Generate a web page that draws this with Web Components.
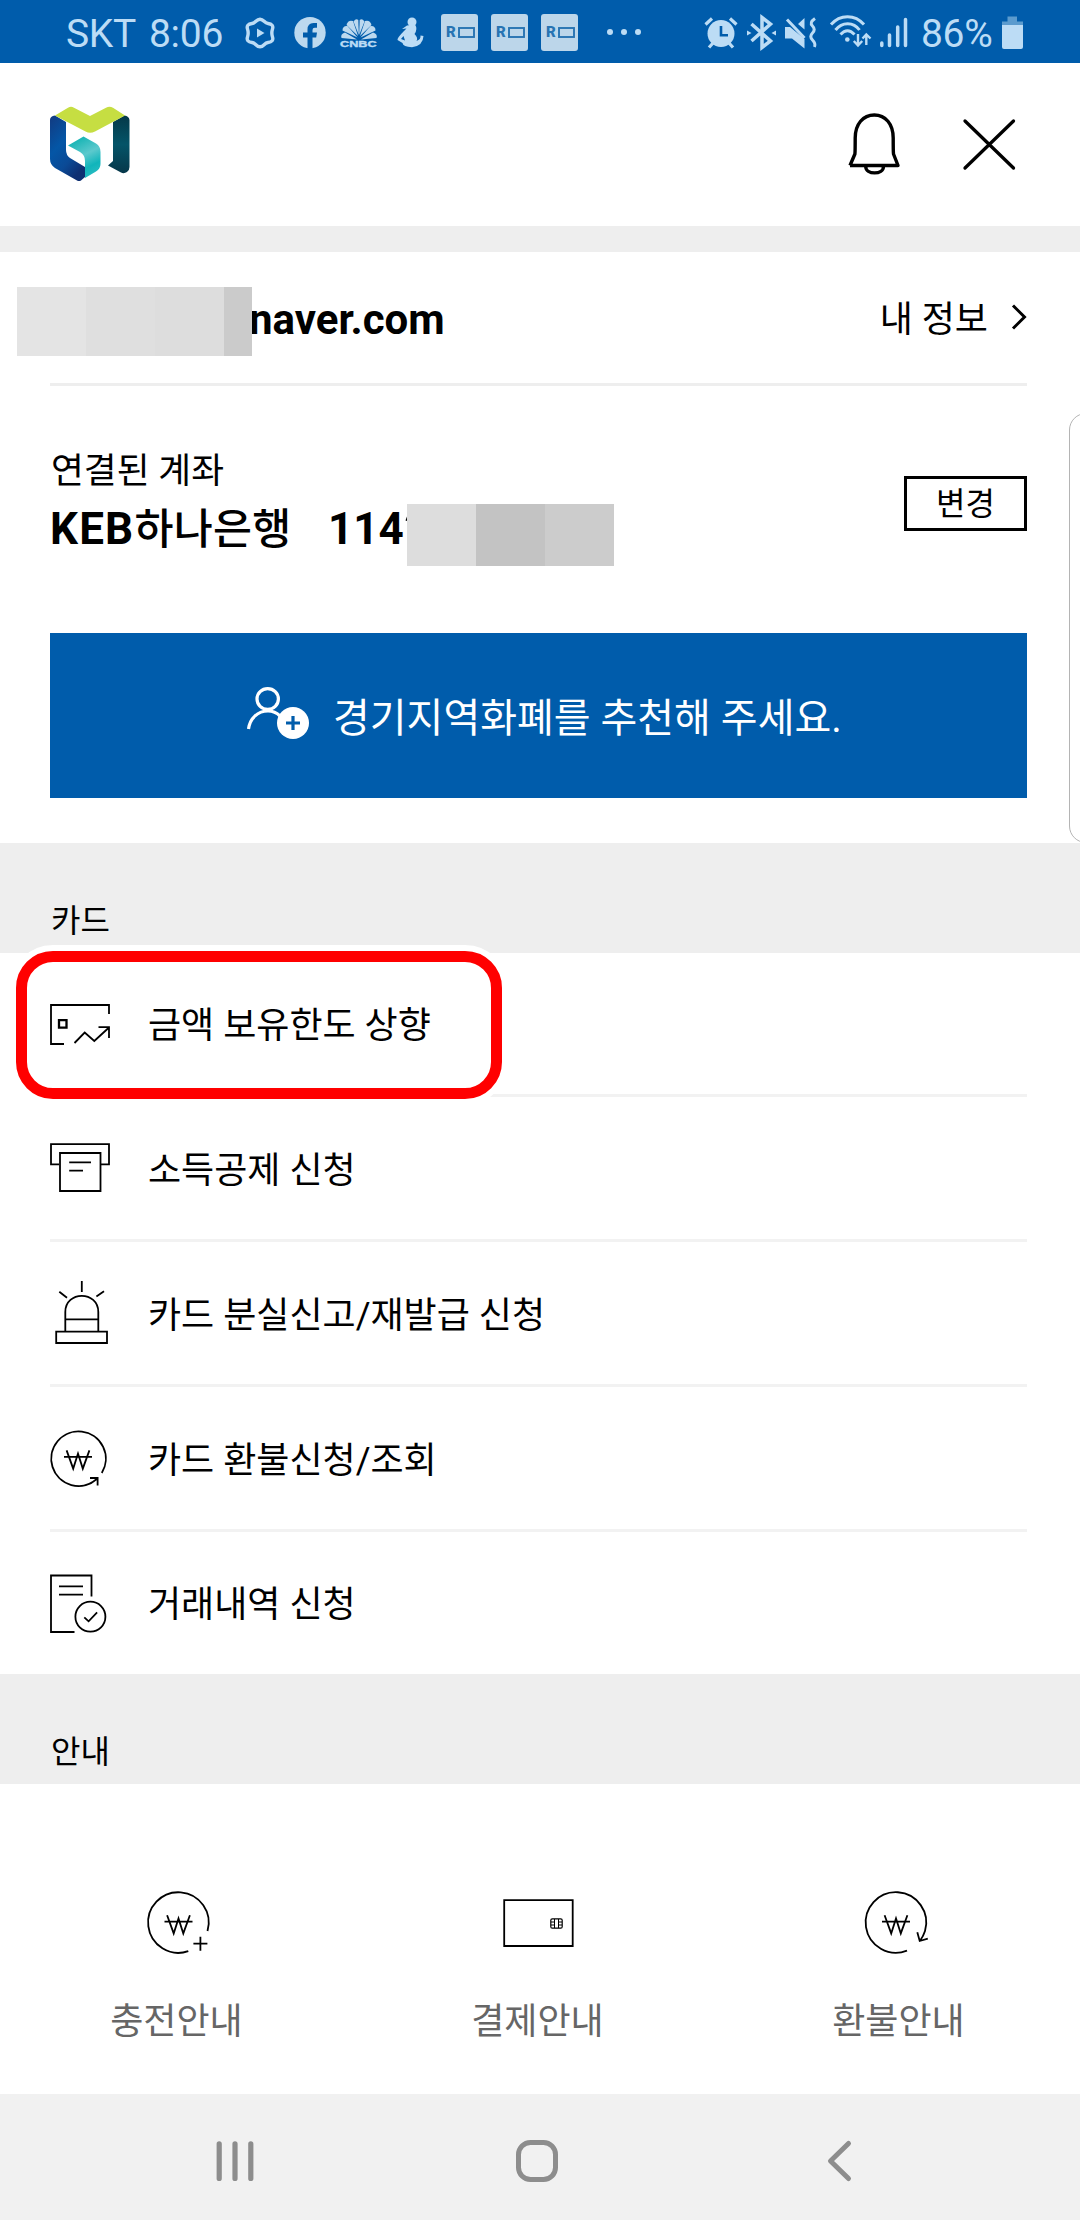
<!DOCTYPE html>
<html lang="ko">
<head>
<meta charset="utf-8">
<title>경기지역화폐</title>
<style>
html,body{margin:0;padding:0;background:#fff}
body{width:1080px;height:2220px;overflow:hidden}
</style>
</head>
<body>
<pay-screen></pay-screen>
<script>
const FONT = 'font-family:Roboto,"Noto Sans CJK KR",sans-serif;';

const WON = (dx, dy) => `<path transform="translate(${dx} ${dy})" d="M-11.4-7.6-4.8 10.6 0-4.4 4.8 10.6 11.4-7.6M-14-1.2H14"/>`;
/* name: [viewBox, markup]; stroke icons share a 1.8px black line */
const ICONS = {
  logo: ['50 106 80 76', `<defs>
    <linearGradient id="b" x1="0" y1="0" x2=".6" y2="1"><stop offset="0" stop-color="#123a80"/><stop offset=".45" stop-color="#0456a6"/><stop offset=".75" stop-color="#0a4a96"/><stop offset="1" stop-color="#0e2f72"/></linearGradient>
    <linearGradient id="t" x1=".3" y1="0" x2=".7" y2="1"><stop offset="0" stop-color="#0fb2b2"/><stop offset=".45" stop-color="#5cc9cd"/><stop offset=".75" stop-color="#10b5bb"/><stop offset="1" stop-color="#2bbcc2"/></linearGradient>
    <linearGradient id="d" x1="0" y1="0" x2="0" y2="1"><stop offset="0" stop-color="#053848"/><stop offset=".5" stop-color="#045468"/><stop offset="1" stop-color="#06374a"/></linearGradient></defs>
    <g stroke="none">
    <path fill="url(#b)" d="M55 115.5 66 122V150Q66 155 70 158L85 167V177L81 180.5Q79 181.500 77 180.500L55 168Q50 164.500 50 159V120Q50 116 55 115.5Z"/>
    <path fill="url(#d)" d="M124.500 115.500 113 122V161L108 165.500 121 172.500Q124 174 127 172 129.500 170 129.500 167V120Q129 116 124.500 115.500Z"/>
    <path fill="#c6de42" d="M55 115.500 68 107.700Q71 106 74 107.700L90 116 106 107.700Q109.500 106 113 107.700L125 115.500 95 131.500Q90 134 85.500 131.500Z"/>
    <path fill="url(#t)" d="M83.500 136.500 68 145.500 80 152Q85 155 85 161V178L96 171.500Q100.500 168.500 100.500 164V152Q100.500 146 96 143.500Z"/></g>`],
  bell: ['847 112 54 63', `<path stroke-width="3.4" stroke-linejoin="round" d="M850 165.500H898L893.500 154Q893.200 152 893.200 138C893.200 124 885.500 115 874.300 115S855.200 124 855.200 138Q855.200 152 854.900 154L850 165.500M865.700 166.500C865.700 175 883.500 175 883.500 166.500"/>`],
  close: ['962 118 54 53', `<path stroke-width="3.3" stroke-linecap="round" d="M965 121 1013.500 168M1013.500 121 965 168"/>`],
  chevron: ['1012 303 17 28', `<path stroke-width="3" d="M1014 305.500 1025.500 317 1014 328.500"/>`],
  invite: ['246 685 64 56', `<g stroke="#fff" stroke-width="3.200"><ellipse cx="267.700" cy="699" rx="10.700" ry="10.400"/><path d="M248.500 729C250 718 258 711 268 711Q275 711 280 716"/></g><circle cx="293" cy="723" r="16" fill="#fff" stroke="none"/><path stroke="#005cab" stroke-width="3.200" d="M286 723H300M293 716V730"/>`],
  limit: ['49 1002 62 43', `<path d="M109 1013V1004H51V1043H64M74.500 1042 84.700 1031.500 94.300 1040 109 1026.500M98.500 1026.200H109V1037"/><path stroke-width="2.300" d="M59 1019.200H66.500V1026.700H59Z"/>`],
  receipt: ['49 1142 62 51', `<path d="M59 1164.300H51V1144.200H109V1164.300H101M60 1153H100.500V1191H60ZM69.200 1162.300H91M69.200 1170.700H83"/>`],
  siren: ['49 1280 62 65', `<path d="M81.800 1281V1292M59.300 1291.700 67 1297.700M104 1291.300 96.400 1296.500M65.300 1331V1312C65.300 1290.500 98.300 1290.500 98.300 1312V1331M65.300 1319.300H98.300M56.200 1331.700H107V1343H56.200Z"/>`],
  refund: ['49 1428 62 60', `<path d="M101.800 1472A27.300 27.300 0 1 0 96.800 1478M90 1477H97.600V1484.500"/>${WON(78,1457)}`],
  history: ['49 1572 62 61', `<path d="M91.500 1595.500V1574.500H51V1631H74.500M59 1585.300H83M59 1593.700H83M84.300 1616.300 88.600 1620.300 97.100 1611.300"/><circle cx="90.400" cy="1615.700" r="15"/>`],
  charge: ['146 1890 64 66', `<path d="M207.500 1931A30.300 30.300 0 1 0 188.300 1951.200M193.400 1943.700H207.400M200.400 1936.700V1950.700"/>${WON(178.500,1922.800)}`],
  card: ['506 1890 64 66', `<path d="M504.200 1900.200H572.700V1946H504.200Z"/><rect x="550.800" y="1918.800" width="11.400" height="9.400" rx="1.500" stroke-width="1.200"/><path stroke-width="1" d="M554.500 1919V1928M558.500 1919V1928M551 1922H554.500M551 1925H554.500M558.500 1922H562M558.500 1925H562"/>`],
  back: ['864 1890 64 66', `<path d="M907 1950.700A30.300 30.300 0 1 1 925 1931Q923.500 1936 920 1940.700M917.300 1932.300 919.700 1941 927.800 1938.700"/>${WON(896,1922.800)}`],
  recents: ['205 2131 60 60', `<path stroke="#8d8d8d" stroke-width="5.2" stroke-linecap="round" d="M219.200 2143.800V2178.400M235 2143.800V2178.400M250.800 2143.800V2178.400"/>`],
  home: ['507 2131 60 60', `<rect x="518.500" y="2142.500" width="37" height="37" rx="12" stroke="#8d8d8d" stroke-width="5"/>`],
  prev: ['809 2131 60 60', `<path stroke="#8d8d8d" stroke-width="5" stroke-linecap="round" stroke-linejoin="round" d="M848.500 2143.500 830.500 2161 848.500 2178.500"/>`],
  play: ['244 16 32 34', `<path stroke="#bcdcf5" stroke-width="3.400" stroke-linejoin="round" d="M260 19.300C264 19.300 264 23 268 23.500 272 24 273.500 26 272.500 29 271.500 32 271.500 34 272.500 37 273.500 40 272 42 268 42.500 264 43 264 46.700 260 46.700S256 43 252 42.500C248 42 246.500 40 247.500 37 248.500 34 248.500 32 247.500 29 246.500 26 248 24 252 23.500 256 23 256 19.300 260 19.300Z"/><path fill="#bcdcf5" stroke="none" d="M257 28.500 264.500 33 257 37.500Z"/>`],
  fb: ['294 16 32 34', `<circle cx="310" cy="32.700" r="15.700" fill="#bcd9ef" stroke="none"/><path fill="#005cab" stroke="none" d="M307.500 49V37.500H303V32.500H307.500V29.500Q307.500 23 313.500 23H317V27.700H314.700Q312.500 27.700 312.500 30V32.500H317L316.200 37.500H312.500V49Z"/>`],
  peacock: ['341 18 38 23', `<g fill="#bcd9ef" stroke="none"><g id="f"><path d="M358 39.500 342.500 38Q341 34 346 32.500Z"/><path d="M358.500 37.500 343.500 30.500Q343.500 25.500 348.500 26Z"/><path d="M359 36 347.500 25Q349 19.500 354 21Z"/><path d="M359.800 35 354.500 21.500Q357 18 359.300 20Z"/></g><use href="#f" transform="matrix(-1 0 0 1 720 0)"/></g>`],
  figure: ['396 16 28 33', `<g fill="#bcdcf5" stroke="none"><circle cx="412" cy="22" r="4.500"/><path d="M402 29 407 25.500 415 24.500Q418 29 414.500 34 418.500 38 416.500 41 421 39.500 420.500 35.500L423.500 36Q423 46 412 47.200 403 47 402.500 43L397.500 40Q397 38 404 31L406.500 28.500ZM403.500 36 401 39 405 40.500Z" fill-rule="evenodd"/></g>`],
  box: ['457 27 17 11', `<rect x="458" y="28" width="15" height="9" stroke="#2874b3" stroke-width="1.900"/>`],
  dots: ['606 28 36 8', `<g fill="#bcdcf5" stroke="none"><circle cx="610" cy="32" r="3"/><circle cx="624" cy="32" r="3"/><circle cx="638" cy="32" r="3"/></g>`],
  alarm: ['704 16 34 33', `<g stroke="#bcdcf5" stroke-width="3.200"><path d="M705.500 24.500 712 18.500M730 18.500 736.500 24.500M713 43 709 47.500M729 43 733 47.500"/><circle cx="721" cy="33.500" r="13.500" fill="#bcdcf5" stroke="none"/><path stroke="#005cab" stroke-width="2.600" d="M721 26V35.300H728"/></g>`],
  bt: ['746 15 31 35', `<path stroke="#bcdcf5" stroke-width="3.500" d="M751.500 24 770.500 41 762 47.500V17.500L770.500 24 751.500 41"/><path fill="#bcdcf5" stroke="none" d="M747 30.500 751.500 33 747 35.500ZM776 30.500 771.500 33 776 35.500Z"/>`],
  mute: ['784 15 34 35', `<g fill="#bcdcf5" stroke="none"><path d="M785 27H790L804.500 39V48.500L792 38.500H785ZM798 24 804.500 18V29.500Z"/></g><path stroke="#bcdcf5" stroke-width="3" d="M787 19.500 804.500 38M815 18.500Q809 22.500 812.500 26T812.500 33 812.500 40 814.500 47"/>`],
  wifi: ['829 14 43 34', `<g stroke="#bcdcf5" stroke-width="3"><path d="M831 24.500C840 14 855 14 864 24.500M835.500 30C842 21.500 853.500 21.500 859.500 30M840.500 34.500Q847.500 27 854.500 34.500"/><circle cx="847.300" cy="39.500" r="2.300" fill="#bcdcf5" stroke="none"/><path stroke-width="2.400" d="M858 34V45M853.800 41 858 45.500 862.200 41M866.300 45V35M862.500 38.500 866.300 34.500 870.500 38.500"/></g>`],
  signal: ['879 16 29 32', `<path stroke="#bcdcf5" stroke-width="3.500" stroke-linecap="round" d="M881.800 43V45.500M889.500 35V45.500M897.700 27V45.500M905.500 19.500V45.500"/>`],
  battery: ['1001 15 23 35', `<g stroke="none"><path fill="#5b9bce" d="M1002 25V21.500H1007.500V16.500H1017V21.500H1023V25Z"/><path fill="#bcdcf5" d="M1002 25H1023V47Q1023 49 1021 49H1004Q1002 49 1002 47Z"/></g>`],
  digit: ['404 515 4 7', `<path fill="#000" stroke="none" d="M405.500 520.500 407 516.500V521Z"/>`]
};

const define = (name, css, html) => customElements.define(name, class extends HTMLElement {
  constructor() {
    super();
    this.attachShadow({mode: 'open'}).innerHTML =
      `<style>:host{display:block;box-sizing:border-box}${css}</style>` +
      (typeof html === 'function' ? html(this) : html);
  }
});

customElements.define('line-icon', class extends HTMLElement {
  connectedCallback() {
    const [box, art] = ICONS[this.getAttribute('name')];
    const [, , w, h] = box.split(' ');
    if (!this.shadowRoot) this.attachShadow({mode: 'open'});
    this.shadowRoot.innerHTML = `<style>:host{display:block;flex:none;width:${w}px;height:${h}px}svg{display:block;overflow:visible}</style>
      <svg width="${w}" height="${h}" viewBox="${box}" fill="none" stroke="#000" stroke-width="1.8">${art}</svg>`;
  }
});

customElements.define('mosaic-mask', class extends HTMLElement {
  connectedCallback() {
    if (!this.shadowRoot) this.attachShadow({mode: 'open'});
    const cells = this.getAttribute('cells').split(' ').map(c => c.split(':'));
    this.shadowRoot.innerHTML = `<style>:host{display:flex;flex:none}i{display:block;height:100%}</style>` +
      cells.map(([w, c]) => `<i style="width:${w}px;background:${c}"></i>`).join('');
  }
});

define('app-badge', `:host{display:flex;width:37px;height:37px;flex:none;border-radius:3px;background:#bcd6ea;align-items:center;padding-left:5px;gap:2.500px}
  span{font:900 15px/37px Roboto;color:#2874b3;width:9px}`, `<span>R</span><line-icon name="box"></line-icon>`);

define('status-bar', `:host{display:flex;height:63px;background:#005cab;color:#bcdcf5;${FONT}font-size:39px;line-height:63px;padding:3px 57px 0 66px;white-space:nowrap}
  .l,.r{display:flex;align-items:flex-start}.r{margin-left:auto}
  span{line-height:63px;letter-spacing:-.3px}
  line-icon,app-badge{margin-top:var(--y)}
  .cn{width:38px;margin-left:14px;margin-top:15px}
  .cn line-icon{margin:0}
  .cn b{display:block;font:900 8.800px/9px "Liberation Sans";transform-origin:0 0;transform:scaleX(1.440);-webkit-text-stroke:.4px #bcdcf5;height:9px;margin-top:-1px;letter-spacing:0}`,
  `<div class="l"><span style="width:83px">SKT</span><span style="width:95px">8:06</span>
   <line-icon name="play" style="--y:13px"></line-icon>
   <line-icon name="fb" style="--y:13px;margin-left:18px"></line-icon>
   <div class="cn"><line-icon name="peacock"></line-icon><b>CNBC</b></div>
   <line-icon name="figure" style="--y:13px;margin-left:18px"></line-icon>
   <app-badge style="--y:11px;margin-left:17px"></app-badge><app-badge style="--y:11px;margin-left:13px"></app-badge><app-badge style="--y:11px;margin-left:13px"></app-badge>
   <line-icon name="dots" style="--y:25px;margin-left:28px"></line-icon></div>
   <div class="r"><line-icon name="alarm" style="--y:13px"></line-icon>
   <line-icon name="bt" style="--y:12px;margin-left:8px"></line-icon>
   <line-icon name="mute" style="--y:12px;margin-left:7px"></line-icon>
   <line-icon name="wifi" style="--y:11px;margin-left:11px"></line-icon>
   <line-icon name="signal" style="--y:13px;margin-left:7px"></line-icon>
   <span style="width:80px;margin-left:13px">86%</span>
   <line-icon name="battery" style="--y:12px;margin-right:-1px"></line-icon></div>`);

define('app-header', `:host{display:flex;height:189px;border-bottom:26px solid #eee;padding:43px 64px 0 50px;box-sizing:border-box}
  .r{display:flex;margin-left:auto;gap:61px;padding-top:6px}.r :last-child{margin-top:6px}`,
  `<line-icon name="logo"></line-icon><div class="r"><line-icon name="bell"></line-icon><line-icon name="close"></line-icon></div>`);

define('profile-row', `:host{display:flex;height:134px;margin:0 53px 0 17px;padding-top:35px;${FONT}color:#000;position:relative}
  mosaic-mask{height:69px}
  b{font-size:42px;font-weight:700;line-height:66px;margin-left:-3px}
  .me{margin-left:auto;display:flex;font-size:36px;line-height:67px}
  .me line-icon{margin:16px -1px 0 23px}
  hr{position:absolute;left:33px;right:0;bottom:0;height:3px;margin:0;border:0;background:#eee}`,
  `<mosaic-mask cells="69:#e4e4e4 69:#dfdfdf 69:#dddddd 28:#cbcbcb" style="z-index:1"></mosaic-mask><b>naver.com</b>
   <div class="me"><span>내 정보</span><line-icon name="chevron"></line-icon></div><hr>`);

define('account-row', `:host{display:flex;height:247px;margin:0 53px 0 50px;padding-top:62px;${FONT}color:#000}
  .t{font-size:35.700px;line-height:46px;padding-left:1px}
  .n{display:flex;font-size:44px;line-height:62px;font-weight:700;height:62px;margin-top:4px;white-space:nowrap}
  .n i{font:500 42.400px/0 "Noto Sans CJK KR";letter-spacing:.3px}
  .n span{width:278px;letter-spacing:1.200px}.n u{text-decoration:none;width:76px}
  .n line-icon{margin-top:17px;margin-right:-1px}.n mosaic-mask{margin-top:6px;height:62px}
  button{margin:28px 0 0 auto;width:123px;height:55px;border:3px solid #000;background:#fff;font:400 32px/44px "Noto Sans CJK KR";color:#000;padding:0 0 5px;box-sizing:border-box}`,
  `<div><div class="t">연결된 계좌</div><div class="n"><span>KEB<i>하나은행</i></span><u>114</u><line-icon name="digit"></line-icon><mosaic-mask cells="69:#dddddd 69:#c3c3c3 69:#cccccc"></mosaic-mask></div></div><button>변경</button>`);

define('invite-banner', `:host{display:flex;height:165px;margin:0 53px 45px 50px;background:#005cab;color:#fff;${FONT}font-size:40px;line-height:171px;padding-left:196px;white-space:nowrap}
  line-icon{margin-top:52px}span{margin-left:23px}`,
  `<line-icon name="invite"></line-icon><span><slot></slot></span>`);

define('section-title', `:host{height:110px;background:#eee;${FONT}font-size:32px;line-height:48px;padding:54px 0 0 51px;color:#000}`, `<slot></slot>`);

define('menu-row', `:host{display:flex;align-items:center;height:145px;margin:0 53px 0 49px;${FONT}font-size:36px;color:#000;padding-bottom:2px;position:relative}
  :host::after{content:"";position:absolute;left:1px;right:0;bottom:0;height:3px;background:#f2f2f2}
  :host([first]){height:144px}
  :host([last]){height:142px;padding:0}:host([last])::after{display:none}
  span{margin-left:37px;line-height:52px;padding-top:4px}
  :host([raise]) line-icon{margin-bottom:2px}
  .ring{position:absolute;left:-39px;top:-8px;width:498px;height:160px;box-sizing:border-box;border:6px solid #fff;border-radius:43px;z-index:2}
  .ring::before{content:"";display:block;height:100%;box-sizing:border-box;border:11px solid #f00;border-radius:37px}`,
  el => `<line-icon name="${el.getAttribute('icon')}"></line-icon><span><slot></slot></span>${el.hasAttribute('first') ? '<div class="ring"></div>' : ''}`);

define('guide-item', `:host{width:361px;display:flex;flex-direction:column;align-items:center;${FONT}font-size:36px;line-height:52px;color:#666}
  span{margin-top:40px}line-icon{margin-left:var(--dx,0)}`,
  el => `<line-icon name="${el.getAttribute('icon')}"></line-icon><span><slot></slot></span>`);

define('guide-grid', `:host{display:flex;height:310px;padding-top:106px;margin-left:-4px;width:1084px}`, `<slot></slot>`);

define('nav-bar', `:host{display:flex;height:126px;background:#f1f1f1;padding:37px 205px 0;gap:242px}`,
  `<line-icon name="recents"></line-icon><line-icon name="home"></line-icon><line-icon name="prev"></line-icon>`);

define('edge-panel', `:host{position:absolute;left:1069px;top:413px;width:40px;height:430px;border:1.500px solid #b4b4b4;border-radius:17px;background:#fff}`, '');

define('pay-screen', `:host{width:1080px;height:2220px;position:relative;overflow:hidden;background:#fff}`,
  `<status-bar></status-bar><app-header></app-header><profile-row></profile-row><account-row></account-row>
   <invite-banner>경기지역화폐를 추천해 주세요.</invite-banner>
   <section-title>카드</section-title>
   <menu-row first icon="limit">금액 보유한도 상향</menu-row>
   <menu-row raise icon="receipt">소득공제 신청</menu-row>
   <menu-row raise icon="siren">카드 분실신고/재발급 신청</menu-row>
   <menu-row icon="refund">카드 환불신청/조회</menu-row>
   <menu-row last icon="history">거래내역 신청</menu-row>
   <section-title>안내</section-title>
   <guide-grid><guide-item icon="charge" style="--dx:3px">충전안내</guide-item><guide-item icon="card" style="--dx:1px">결제안내</guide-item><guide-item icon="back" style="--dx:-5px">환불안내</guide-item></guide-grid>
   <nav-bar></nav-bar><edge-panel></edge-panel>`);
</script>
</body>
</html>
